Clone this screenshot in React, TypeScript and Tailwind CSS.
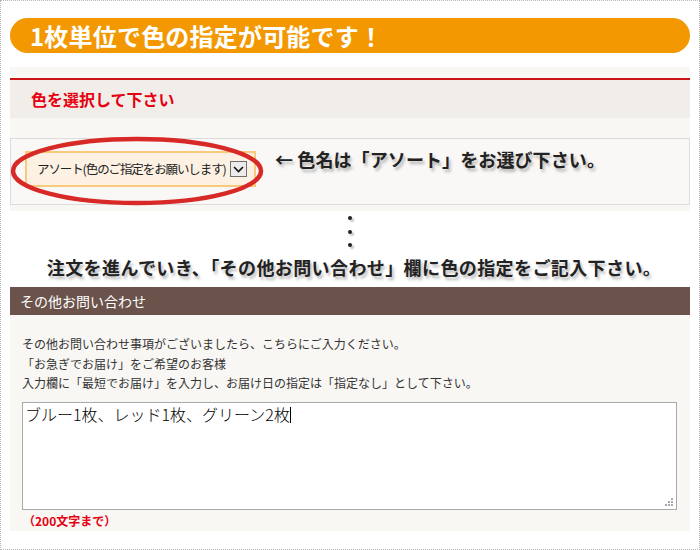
import React from "react";

const jp = { fontFamily: '"Noto Sans CJK JP", "Noto Sans", sans-serif' };

export default function App() {
  return (
    <div
      className="w-[700px] h-[550px] border border-dotted border-[#b5b5b5] bg-white px-[9px] pt-[17px] overflow-hidden"
      style={jp}
    >
      {/* Orange banner */}
      <div className="h-[35px] rounded-full bg-[#f39800] pl-[20px] flex items-center">
        <span className="text-[24px] font-bold text-white leading-none tracking-[0.2px]">
          1枚単位で色の指定が可能です！
        </span>
      </div>

      {/* Select colour section */}
      <div className="mt-[14px] bg-[#f8f7f4] pt-[11px] pb-[6px]">
        <div className="h-[2px] bg-[#cc1417]" />
        <div className="h-[38px] bg-[#f1eee9] pl-[21px] flex items-center">
          <span className="text-[16px] font-bold text-[#e50012] leading-none">色を選択して下さい</span>
        </div>
        <div className="h-[20px]" />
        <div className="relative h-[67px] border border-[#dcdcdc] bg-[#f9f8f6] pl-[14px] pt-[12px] flex items-start">
          <div className="shrink-0 w-[231px] h-[36px] border-2 border-[#f9c97c] bg-[#fdf1e3] pl-[10px] flex items-center">
            <span className="whitespace-nowrap text-[12.5px] text-[#222] leading-none tracking-[-1.1px]">
              アソート(色のご指定をお願いします)
            </span>
            <span className="shrink-0 ml-[4px] w-[17px] h-[16px] border border-[#6f6f6f] bg-[#ececec] flex items-center justify-center">
              <svg width="11" height="7" viewBox="0 0 11 7">
                <path d="M1 1 L5.5 5.5 L10 1" fill="none" stroke="#111" strokeWidth="1.6" />
              </svg>
            </span>
          </div>
          <div className="ml-[19px] mt-[-1px] whitespace-nowrap text-[18px] font-bold text-[#222] leading-none [text-shadow:2px_3px_3px_rgba(0,0,0,0.28)] tracking-[0.1px]">
            ← 色名は「アソート」をお選び下さい。
          </div>
          <svg
            className="absolute -left-[1px] -top-[3px] pointer-events-none"
            width="256"
            height="72"
            viewBox="0 0 256 72"
          >
            <ellipse cx="127" cy="35" rx="124" ry="32" fill="none" stroke="#d72a27" strokeWidth="4.5" />
          </svg>
        </div>
      </div>

      {/* Dots */}
      <div className="flex flex-col items-center gap-[9.5px] pt-[5px]">
        <span className="w-[4px] h-[4px] rounded-full bg-[#222] [box-shadow:2px_2px_2px_rgba(0,0,0,0.25)]" />
        <span className="w-[4px] h-[4px] rounded-full bg-[#222] [box-shadow:2px_2px_2px_rgba(0,0,0,0.25)]" />
        <span className="w-[4px] h-[4px] rounded-full bg-[#222] [box-shadow:2px_2px_2px_rgba(0,0,0,0.25)]" />
      </div>
      <div className="mt-[9px] text-center whitespace-nowrap text-[18px] font-bold text-[#222] leading-[22px] [text-shadow:2px_3px_3px_rgba(0,0,0,0.28)] tracking-[0.4px] pl-[8px]">
        注文を進んでいき、「その他お問い合わせ」欄に色の指定をご記入下さい。
      </div>

      {/* Other inquiries */}
      <div className="mt-[9px] h-[28px] bg-[#6b524a] pl-[10px] flex items-center">
        <span className="text-[14px] text-white leading-none">その他お問い合わせ</span>
      </div>
      <div className="bg-[#f8f7f4] pl-[12px] pr-[13px] pt-[19px] h-[216px]">
        <div className="text-[12px] text-[#333] leading-[19.5px]">
          <p>その他お問い合わせ事項がございましたら、こちらにご入力ください。</p>
          <p>「お急ぎでお届け」をご希望のお客様</p>
          <p>入力欄に「最短でお届け」を入力し、お届け日の指定は「指定なし」として下さい。</p>
        </div>
        <div className="relative mt-[9px] h-[108px] border border-[#a9a9a9] bg-white">
          <div className="pl-[2px] pt-[1px] text-[16px] text-black leading-[20px] font-light">
            ブルー1枚、レッド1枚、グリーン2枚
            <span className="inline-block w-[1px] h-[16px] bg-black align-[-2px]" />
          </div>
          <svg className="absolute right-[3px] bottom-[3px]" width="8" height="8" viewBox="0 0 8 8">
            <rect x="6" y="0" width="2" height="2" fill="#aaa" />
            <rect x="3" y="3" width="2" height="2" fill="#aaa" />
            <rect x="6" y="3" width="2" height="2" fill="#aaa" />
            <rect x="0" y="6" width="2" height="2" fill="#aaa" />
            <rect x="3" y="6" width="2" height="2" fill="#aaa" />
            <rect x="6" y="6" width="2" height="2" fill="#aaa" />
          </svg>
        </div>
        <div className="mt-[3px] pl-[1px] text-[12px] font-bold text-[#e50012] leading-[16px]">
          （200文字まで）
        </div>
      </div>
    </div>
  );
}
